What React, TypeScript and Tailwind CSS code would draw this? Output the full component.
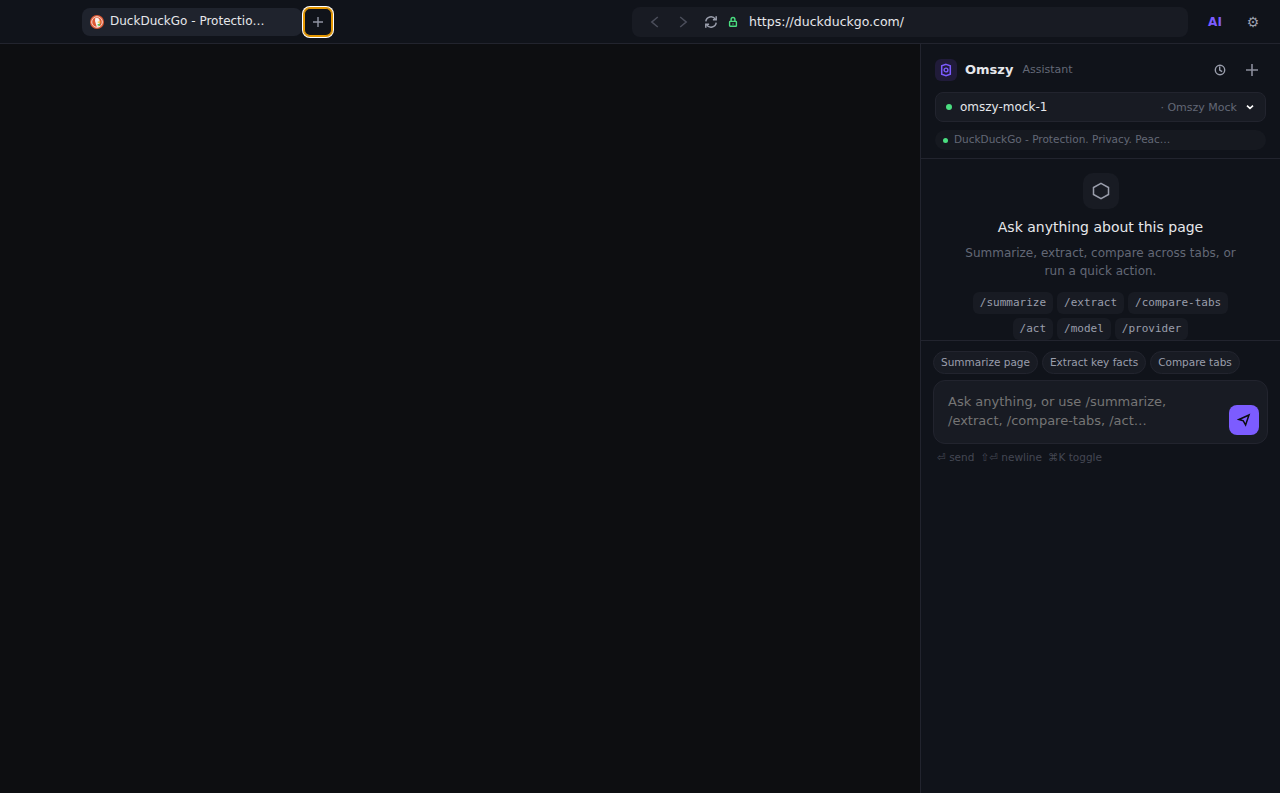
import React from "react";

const quickActions = ["Summarize page", "Extract key facts", "Compare tabs"];
const commandRows = [
  ["/summarize", "/extract", "/compare-tabs"],
  ["/act", "/model", "/provider"],
];

function DuckIcon() {
  return (
    <svg width="14" height="14" viewBox="0 0 14 14" className="shrink-0">
      <circle cx="7" cy="7" r="7" fill="#de5833" />
      <circle cx="7" cy="7" r="5.3" fill="none" stroke="#f6d9cf" strokeWidth="1" />
      <path d="M5.2 3.2C6.4 2 9.6 2.8 9.6 5.4L9.9 11.5 6.8 12.1 5 6z" fill="#f4f4f2" />
      <path d="M7.8 6.5h2.9l-.4 1.3H7.7z" fill="#fdc62e" />
      <path d="M7.5 9.2l2.6-.7v2.4l-2.4-.4z" fill="#59b947" />
    </svg>
  );
}

function TopBar() {
  return (
    <header className="flex h-11 shrink-0 items-center border-b border-[#22242e] bg-[#10131a] pl-[82px]">
      <div className="flex h-7 w-[220px] shrink-0 items-center gap-1.5 rounded-lg bg-[#1f232d] pl-2">
        <DuckIcon />
        <span className="-mt-0.5 text-[12px] leading-4 text-[#e6e7eb]">DuckDuckGo - Protectio…</span>
      </div>
      <button className="ml-0.5 flex size-7 shrink-0 items-center justify-center rounded-md text-[#9094a3] shadow-[inset_0_0_0_1px_#e59700,0_0_0_1px_#e59700,0_0_0_2px_#ffffff]">
        <svg width="12" height="12" viewBox="0 0 12 12" stroke="currentColor" strokeWidth="1.4">
          <path d="M6 1v10M1 6h10" />
        </svg>
      </button>
      <div className="ml-[300px] flex h-[30px] w-[556px] shrink-0 items-center rounded-lg bg-[#181b23] pl-[9px]">
        <button className="flex size-7 items-center justify-center text-[#4b4e5b]">
          <svg width="14" height="14" viewBox="0 0 14 14" fill="none" stroke="currentColor" strokeWidth="1.5">
            <path d="M9.8 2L3.8 7l6 5" />
          </svg>
        </button>
        <button className="flex size-7 items-center justify-center text-[#4b4e5b]">
          <svg width="14" height="14" viewBox="0 0 14 14" fill="none" stroke="currentColor" strokeWidth="1.5">
            <path d="M4.2 2l6 5-6 5" />
          </svg>
        </button>
        <button className="flex size-7 items-center justify-center text-[#9a9eac]">
          <svg width="14" height="14" viewBox="0 0 14 14" fill="none" stroke="currentColor" strokeWidth="1.5">
            <path d="M1.8 6.4A5.2 5.2 0 0 1 11.3 4.2M12.2 7.6A5.2 5.2 0 0 1 2.7 9.8" />
            <path d="M12.2 1.2v3.6H8.9M1.8 12.8V9.2h3.3" />
          </svg>
        </button>
        <svg width="10" height="12" viewBox="0 0 10 12" fill="none" stroke="#4ade80" strokeWidth="1.4" className="ml-[3px] mt-px">
          <rect x="1.6" y="5.4" width="6.8" height="4.9" rx="0.6" />
          <path d="M3.1 5V3.4a1.9 1.9 0 0 1 3.8 0V5M5 7.4v1" />
        </svg>
        <span className="ml-[11px] text-[12.5px] leading-4 text-[#e6e7eb]">https://duckduckgo.com/</span>
      </div>
      <button className="ml-3 mt-px w-[30px] shrink-0 text-center text-[12px] font-bold leading-4 text-[#7c5cff]">AI</button>
      <button className="ml-2 w-[30px] shrink-0 text-center text-[14px] leading-4 text-[#9a9eac]">⚙</button>
    </header>
  );
}

function PanelHeader() {
  return (
    <div className="flex h-[115px] flex-col border-b border-[#22242e] px-[14px] pt-3">
      <div className="flex h-7 items-center">
        <div className="flex size-[22px] items-center justify-center rounded-md bg-[#201b39]">
          <svg width="14" height="14" viewBox="0 0 14 14" fill="none" stroke="#7c5cff" strokeWidth="1.5">
            <path d="M7 1.4l4.3 1.5v8.2L7 12.6l-4.3-1.5V2.9z" />
            <circle cx="7" cy="7" r="1.9" strokeWidth="1.4" />
          </svg>
        </div>
        <span className="ml-2 text-[13px] font-bold text-[#e6e7eb]">Omszy</span>
        <span className="ml-[9px] text-[11px] text-[#636876]">Assistant</span>
        <button className="ml-auto flex size-7 items-center justify-center text-[#9a9eac]">
          <svg width="12" height="12" viewBox="0 0 12 12" fill="none" stroke="currentColor" strokeWidth="1.4">
            <circle cx="6" cy="6" r="4.7" />
            <path d="M5.7 2.5v3.7l2.5 1.5" />
          </svg>
        </button>
        <button className="ml-1 flex size-7 items-center justify-center text-[#8b8e9c]">
          <svg width="14" height="14" viewBox="0 0 14 14" stroke="currentColor" strokeWidth="1.6">
            <path d="M7 1v12M1 7h12" />
          </svg>
        </button>
      </div>
      <div className="mt-2 flex h-[30px] shrink-0 items-center rounded-lg border border-[#22242e] bg-[#181b23] px-2.5">
        <span className="size-1.5 rounded-full bg-[#4ade80]" />
        <span className="ml-2 text-[12px] text-[#e6e7eb]">omszy-mock-1</span>
        <span className="ml-auto mt-px text-[11px] leading-4 text-[#636876]">· Omszy Mock</span>
        <svg width="10" height="10" viewBox="0 0 10 10" fill="none" stroke="#ffffff" strokeWidth="1.6" className="ml-2">
          <path d="M2 3.6l3 2.8 3-2.8" />
        </svg>
      </div>
      <div className="mt-2 flex h-5 shrink-0 items-center rounded-full bg-[#161920] pl-2">
        <span className="mt-px size-[5px] rounded-full bg-[#4ade80]" />
        <span className="-mt-[3px] ml-1.5 text-[10.5px] leading-4 text-[#636876]">DuckDuckGo - Protection. Privacy. Peac…</span>
      </div>
    </div>
  );
}

function EmptyState() {
  return (
    <div className="flex h-[181px] flex-col items-center overflow-hidden pt-[14px]">
      <div className="flex size-9 shrink-0 items-center justify-center rounded-[10px] bg-[#181b23]">
        <svg width="20" height="20" viewBox="0 0 20 20" fill="none" stroke="#9a9eac" strokeWidth="1.5">
          <path d="M10 2.4l7.5 4.1v7L10 17.6l-7.5-4.1v-7z" />
        </svg>
      </div>
      <h2 className="mt-2 text-[14px] leading-5 text-[#e6e7eb]">Ask anything about this page</h2>
      <p className="mt-[7px] w-[280px] text-center text-[12px] leading-[18px] text-[#636876]">
        Summarize, extract, compare across tabs, or run a quick action.
      </p>
      <div className="mt-3 flex flex-col items-center gap-1">
        {commandRows.map((row) => (
          <div key={row[0]} className="flex gap-1">
            {row.map((cmd) => (
              <code
                key={cmd}
                className="h-[22px] rounded-md bg-[#181b23] px-[7px] font-['DejaVu_Sans_Mono',monospace] text-[11px] leading-[21px] text-[#9a9eac]"
              >
                {cmd}
              </code>
            ))}
          </div>
        ))}
      </div>
    </div>
  );
}

function Composer() {
  return (
    <div className="border-t border-[#22242e] px-3 pt-2.5">
      <div className="flex gap-1">
        {quickActions.map((label) => (
          <button
            key={label}
            className="h-[23px] rounded-full border border-[#22242e] bg-[#181b23] px-[7px] text-[10.5px] leading-[21px] text-[#9a9eac]"
          >
            {label}
          </button>
        ))}
      </div>
      <div className="mt-1.5 flex h-16 items-end rounded-xl border border-[#22242e] bg-[#181b23] pl-[14px] pr-2">
        <p className="mb-[13px] w-[270px] text-[13px] leading-[19px] text-[#757575]">
          Ask anything, or use /summarize,
          <br />
          /extract, /compare-tabs, /act…
        </p>
        <button className="mb-2 ml-auto flex size-[30px] items-center justify-center rounded-lg bg-[#7c5cff]">
          <svg width="14" height="14" viewBox="0 0 14 14" fill="none" stroke="#0b0c10" strokeWidth="1.5">
            <path d="M12 2L2 6.5l4.3 1.4L8.6 12z" />
          </svg>
        </button>
      </div>
      <div className="mt-[5px] flex gap-1.5 pl-1 text-[10.5px] leading-4 text-[#444753]">
        <span>⏎ send</span>
        <span>⇧⏎ newline</span>
        <span>⌘K toggle</span>
      </div>
    </div>
  );
}

export default function App() {
  return (
    <div className="flex h-screen w-full flex-col overflow-hidden bg-[#0d0e11] font-['DejaVu_Sans',sans-serif]">
      <TopBar />
      <div className="flex min-h-0 flex-1">
        <main className="flex-1" />
        <aside className="w-[360px] shrink-0 border-l border-[#22242e] bg-[#10131a]">
          <PanelHeader />
          <EmptyState />
          <Composer />
        </aside>
      </div>
    </div>
  );
}
